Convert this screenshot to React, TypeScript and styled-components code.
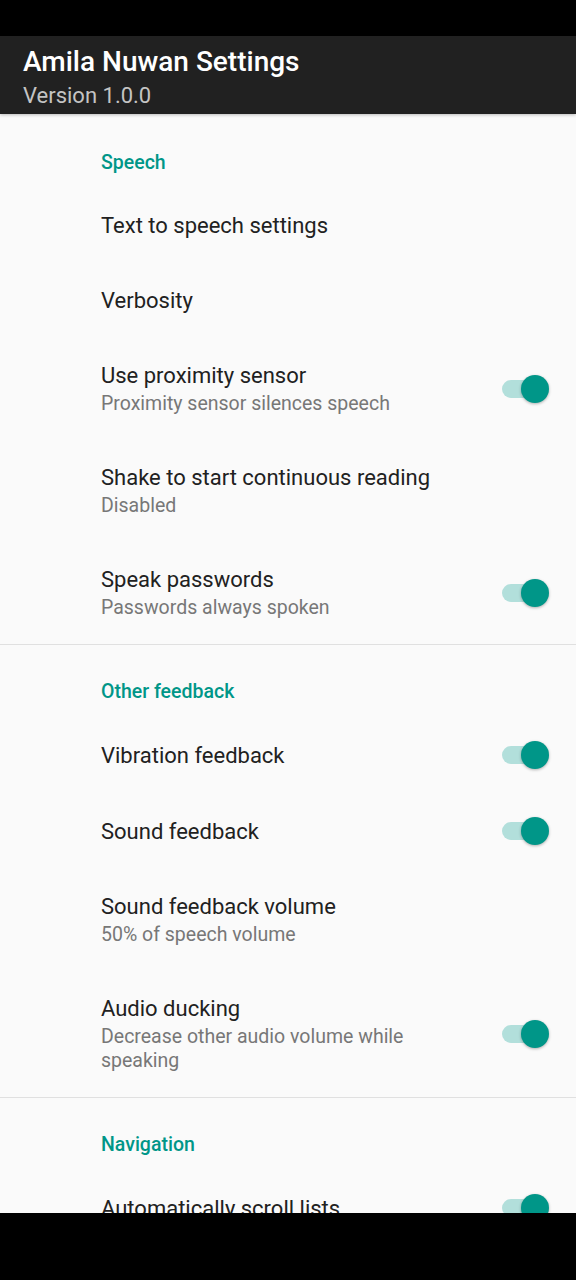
import React from 'react';
import styled, { createGlobalStyle } from 'styled-components';

const GlobalStyle = createGlobalStyle`
    html, body {
        margin: 0;
        padding: 0;
        background: #fafafa;
    }
    body {
        font-family: Roboto, 'Noto Sans', 'Liberation Sans', sans-serif;
        -webkit-font-smoothing: antialiased;
    }
`;

interface SettingItem {
    readonly title: string;
    readonly summary?: string;
    readonly toggle?: boolean;
}

interface SettingSection {
    readonly title: string;
    readonly items: SettingItem[];
}

const sections: SettingSection[] = [
    {
        title: 'Speech',
        items: [
            { title: 'Text to speech settings' },
            { title: 'Verbosity' },
            {
                title: 'Use proximity sensor',
                summary: 'Proximity sensor silences speech',
                toggle: true
            },
            {
                title: 'Shake to start continuous reading',
                summary: 'Disabled'
            },
            {
                title: 'Speak passwords',
                summary: 'Passwords always spoken',
                toggle: true
            }
        ]
    },
    {
        title: 'Other feedback',
        items: [
            { title: 'Vibration feedback', toggle: true },
            { title: 'Sound feedback', toggle: true },
            {
                title: 'Sound feedback volume',
                summary: '50% of speech volume'
            },
            {
                title: 'Audio ducking',
                summary: 'Decrease other audio volume while speaking',
                toggle: true
            }
        ]
    },
    {
        title: 'Navigation',
        items: [{ title: 'Automatically scroll lists', toggle: true }]
    }
];

const Screen = styled.div`
    width: 576px;
    min-height: 1280px;
    background: #fafafa;
    overflow: hidden;
`;

const StatusBar = styled.div`
    height: 36px;
    background: #000;
`;

const Toolbar = styled.header`
    height: 78px;
    box-sizing: border-box;
    padding: 9px 23px 0;
    background: #212121;
    display: flex;
    flex-direction: column;
    box-shadow: 0 1px 3px rgba(0, 0, 0, 0.25);
    position: relative;
    z-index: 1;
`;

const ToolbarTitle = styled.div`
    color: #fff;
    font-size: 28px;
    font-weight: 500;
    line-height: 34px;
`;

const ToolbarSubtitle = styled.div`
    margin-top: 3px;
    color: #c4c4c4;
    font-size: 22px;
    line-height: 28px;
`;

const List = styled.main`
    padding-top: 2px;
`;

const Section = styled.section<{ $divided: boolean }>`
    border-top: ${(p) => (p.$divided ? '1px solid #e0e0e0' : 'none')};
`;

const SectionHeader = styled.div`
    padding: 35px 0 13px 101px;
    color: #009688;
    font-size: 19.5px;
    font-weight: 500;
    line-height: 24px;
`;

const Row = styled.div`
    min-height: 75px;
    box-sizing: border-box;
    padding: 24px 27px 24px 101px;
    display: flex;
    align-items: center;
`;

const RowText = styled.div`
    flex: 1;
    min-width: 0;
    max-width: 370px;
`;

const RowTitle = styled.div`
    color: #212121;
    font-size: 22px;
    line-height: 27px;
    white-space: nowrap;
`;

const RowSummary = styled.div`
    margin-top: 3px;
    color: #777;
    font-size: 19.5px;
    line-height: 24px;
`;

const Switch = styled.div`
    margin-left: auto;
    position: relative;
    width: 47px;
    height: 28px;
    flex-shrink: 0;
`;

const Track = styled.div`
    position: absolute;
    left: 0;
    top: 5px;
    width: 42px;
    height: 18px;
    border-radius: 9px;
    background: #b2dfdb;
`;

const Thumb = styled.div`
    position: absolute;
    right: 0;
    top: 0;
    width: 28px;
    height: 28px;
    border-radius: 50%;
    background: #009688;
    box-shadow: 0 1px 3px rgba(0, 0, 0, 0.3);
`;

const NavBar = styled.div`
    position: fixed;
    left: 0;
    right: 0;
    bottom: 0;
    height: 67px;
    background: #000;
`;

const Toggle: React.FC = () => (
    <Switch>
        <Track />
        <Thumb />
    </Switch>
);

export default function App(): React.ReactElement {
    return (
        <Screen>
            <GlobalStyle />
            <StatusBar />
            <Toolbar>
                <ToolbarTitle>Amila Nuwan Settings</ToolbarTitle>
                <ToolbarSubtitle>Version 1.0.0</ToolbarSubtitle>
            </Toolbar>
            <List>
                {sections.map((section, i) => (
                    <Section key={section.title} $divided={i > 0}>
                        <SectionHeader>{section.title}</SectionHeader>
                        {section.items.map((item) => (
                            <Row key={item.title}>
                                <RowText>
                                    <RowTitle>{item.title}</RowTitle>
                                    {item.summary && (
                                        <RowSummary>{item.summary}</RowSummary>
                                    )}
                                </RowText>
                                {item.toggle && <Toggle />}
                            </Row>
                        ))}
                    </Section>
                ))}
            </List>
            <NavBar />
        </Screen>
    );
}
